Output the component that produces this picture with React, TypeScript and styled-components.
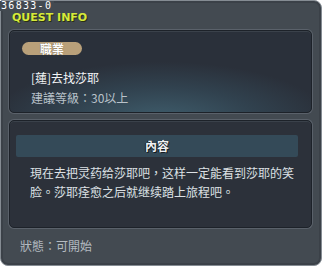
import styled, { createGlobalStyle } from "styled-components";

const GlobalStyle = createGlobalStyle`
  html, body {
    margin: 0;
    padding: 0;
    background: #ffffff;
  }
  body {
    font-family: "Noto Sans CJK TC", "Noto Sans", sans-serif;
  }
`;

export default function App() {
  return (
    <>
      <GlobalStyle />
      <Window>
        <QuestId>36833-0</QuestId>
        <WindowTitle>QUEST INFO</WindowTitle>
        <Panel $glow>
          <Badge>職業</Badge>
          <QuestName>[蓮]去找莎耶</QuestName>
          <QuestLevel>建議等級：30以上</QuestLevel>
        </Panel>
        <Panel>
          <SectionBar>內容</SectionBar>
          <Description>
            現在去把灵药给莎耶吧，这样一定能看到莎耶的笑脸。莎耶痊愈之后就继续踏上旅程吧。
          </Description>
        </Panel>
        <Status>狀態：可開始</Status>
      </Window>
    </>
  );
}

const Window = styled.div`
  position: relative;
  box-sizing: border-box;
  width: 322px;
  height: 266px;
  display: flex;
  flex-direction: column;
  padding: 0 9px 0 8px;
  background: #434a51;
  border: 1px solid #858c93;
  border-radius: 2px 8px 8px 8px;
  box-shadow: inset 0 0 0 2px #3b4148;
`;

const QuestId = styled.div`
  position: absolute;
  top: 0;
  left: -1px;
  padding: 0 2px 0 1px;
  background: #434a51;
  color: #ffffff;
  font-family: "DejaVu Sans Mono", monospace;
  font-size: 10px;
  letter-spacing: 1.3px;
  line-height: 10px;
`;

const WindowTitle = styled.div`
  margin: 11px 0 0 3px;
  height: 18px;
  color: #d6ea3c;
  font-family: "DejaVu Sans", sans-serif;
  font-weight: bold;
  font-size: 11px;
  line-height: 11px;
  text-shadow: 1px 1px 0 #2a3010;
`;

const Panel = styled.div<{ $glow?: boolean }>`
  box-sizing: border-box;
  display: flex;
  flex-direction: column;
  border: 1px solid #1d2229;
  border-radius: 5px;
  box-shadow: 0 0 0 1px #5a616a, inset 0 1px 0 #3a414a;
  background: ${(p) =>
    p.$glow
      ? "radial-gradient(ellipse 70% 90% at 50% 110%, #3f5d6c 0%, #31424f 45%, #2a303a 80%)"
      : "#2c313a"};
  height: ${(p) => (p.$glow ? "83px" : "108px")};
  margin-bottom: 7px;
  padding: ${(p) => (p.$glow ? "11px 12px 0 12px" : "14px 13px 0 6px")};
`;

const Badge = styled.div`
  align-self: flex-start;
  width: 60px;
  height: 13px;
  border-radius: 7px;
  background: #b9a07a;
  color: #ffffff;
  font-weight: bold;
  font-size: 12px;
  line-height: 13px;
  text-align: center;
  text-shadow: 0 0 1px #5a4a30;
`;

const QuestName = styled.div`
  margin: 15px 0 0 9px;
  color: #f2f4f6;
  font-size: 12px;
  line-height: 16px;
`;

const QuestLevel = styled.div`
  margin: 4px 0 0 9px;
  color: #b9c2ca;
  font-size: 12px;
  line-height: 16px;
`;

const SectionBar = styled.div`
  height: 22px;
  border-radius: 2px;
  background: #344a58;
  color: #f0f2f4;
  font-weight: bold;
  font-size: 12px;
  line-height: 22px;
  text-align: center;
  text-shadow: 1px 1px 0 #141a20, -1px 0 0 #141a20;
`;

const Description = styled.div`
  margin: 6px 0 0 14px;
  color: #dde1e5;
  font-size: 12px;
  line-height: 19px;
`;

const Status = styled.div`
  margin: 3px 0 0 11px;
  color: #b4bac0;
  font-size: 12px;
  line-height: 16px;
`;
